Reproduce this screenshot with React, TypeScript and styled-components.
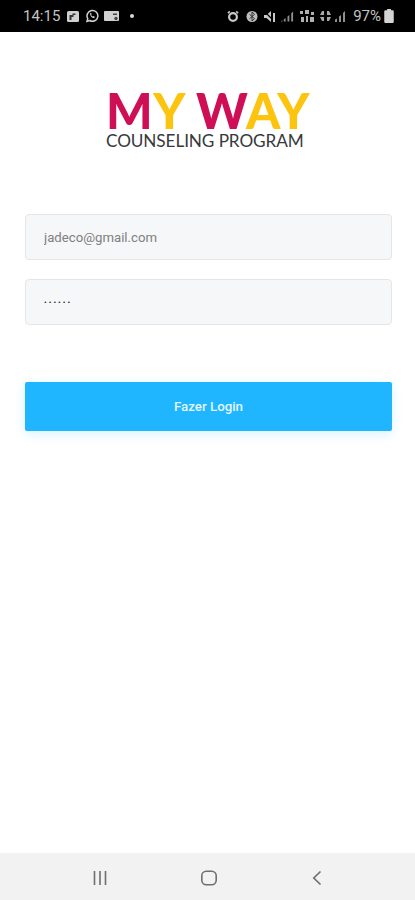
import React, { ReactElement } from 'react';
import styled, { createGlobalStyle } from 'styled-components';

const GlobalStyle = createGlobalStyle`
  html, body {
    margin: 0;
    padding: 0;
    background: #fff;
    font-family: Roboto, "Liberation Sans", sans-serif;
  }
  * { box-sizing: border-box; }
`;

const Screen = styled.div`
  width: 415px;
  height: 900px;
  display: flex;
  flex-direction: column;
  background: #fff;
  overflow: hidden;
`;

const StatusBar = styled.div`
  height: 32px;
  flex: none;
  background: #000;
  color: #c4c4c4;
  display: flex;
  align-items: center;
  justify-content: space-between;
  padding: 0 21px 0 23px;
`;

const StatusGroup = styled.div`
  display: flex;
  align-items: center;
  gap: 5px;
`;

const Clock = styled.span`
  font-size: 15px;
  margin-right: 1px;
`;

const Battery = styled.span`
  font-size: 15px;
  margin-left: 2px;
  margin-right: -2px;
`;

const Content = styled.main`
  flex: 1;
  display: flex;
  flex-direction: column;
  padding: 0 23px 0 25px;
`;

const Logo = styled.div`
  margin-top: 56px;
  margin-left: 81px;
  display: flex;
  flex-direction: column;
  font-family: Lato, "Open Sans", sans-serif;
`;

const LogoTitle = styled.div`
  font-size: 49px;
  line-height: 44px;
  height: 43px;
  font-weight: 900;
  white-space: pre;
  letter-spacing: 0.6px;
`;

const LogoLetter = styled.span<{ $yellow?: boolean }>`
  color: ${({ $yellow }) => ($yellow ? '#fcc30f' : '#cf0f55')};
`;

const LogoSubtitle = styled.div`
  font-size: 17.2px;
  line-height: 20px;
  color: #37393b;
  white-space: nowrap;
  letter-spacing: -0.1px;
`;

const Form = styled.form`
  margin: 63px 0 0;
  display: flex;
  flex-direction: column;
  gap: 19px;
`;

const Field = styled.input`
  width: 100%;
  height: 46px;
  padding: 0 18px;
  border: 1px solid #e4e6e8;
  border-radius: 4px;
  background: #f6f7f9;
  color: #808080;
  font-family: Roboto, "Liberation Sans", sans-serif;
  font-size: 13.2px;
  outline: none;

  &[type='password'] {
    color: #222;
    font-size: 8px;
    letter-spacing: 2px;
  }
`;

const LoginButton = styled.button`
  margin-top: 38px;
  height: 49px;
  border: 0;
  border-radius: 2px;
  background: #1fb6ff;
  box-shadow: 0 3px 12px rgba(31, 182, 255, 0.18);
  color: #e4f6ff;
  font-family: Roboto, "Liberation Sans", sans-serif;
  font-size: 13.3px;
  font-weight: 500;
`;

const NavBar = styled.nav`
  height: 47px;
  flex: none;
  background: #f2f2f2;
  display: flex;
  align-items: center;
  justify-content: space-between;
  padding: 2px 89px 0 91px;
  color: #6f6f6f;
`;

const Icon = styled.svg`
  display: block;
  flex: none;
`;

function StatusIcons(): ReactElement {
  return (
    <StatusBar>
      <StatusGroup>
        <Clock>14:15</Clock>
        <Icon width="14" height="13" viewBox="0 0 13 13">
          <rect x="0.5" y="1" width="12" height="11" rx="1.5" fill="#d0d0d0" />
          <path d="M3 10V5h3V3.5h3V5H7v2H5v3z" fill="#333" />
        </Icon>
        <Icon width="14" height="14" viewBox="0 0 14 14" fill="none">
          <path
            d="M2 12.3l.8-2.700A5.400 5.400 0 1 1 4.700 11.500z"
            stroke="#d0d0d0"
            strokeWidth="1.500"
          />
          <path
            d="M5 4.600c0 2.400 1.900 4.400 4.200 4.600l.6-1.500-1.600-.8-.6.6c-.7-.3-1.200-.9-1.500-1.500l.6-.7-.8-1.500z"
            fill="#d0d0d0"
          />
        </Icon>
        <Icon width="15" height="12" viewBox="0 0 15 12">
          <rect x="0" y="1" width="15" height="10" rx="1" fill="#d0d0d0" />
          <rect x="9" y="3.500" width="4" height="1.500" fill="#444" />
          <circle cx="12" cy="8.500" r="1.700" fill="#444" />
        </Icon>
        <Icon width="4" height="4" viewBox="0 0 4 4" style={{ marginLeft: 6 }}>
          <circle cx="2" cy="2" r="2" fill="#d8d8d8" />
        </Icon>
      </StatusGroup>
      <StatusGroup>
        <Icon width="12" height="13" viewBox="0 0 13 13" fill="none" style={{ marginRight: 2 }}>
          <circle cx="6.500" cy="7" r="4.200" stroke="#c8c8c8" strokeWidth="2.400" />
          <path d="M1 3l2-2M12 3l-2-2" stroke="#c8c8c8" strokeWidth="1.800" />
        </Icon>
        <Icon width="12" height="13" viewBox="0 0 12 13" fill="none">
          <circle cx="6" cy="6.500" r="5.500" fill="#bdbdbd" />
          <path d="M3.500 4.300l5 4.300L6 11V2l2.500 2.400-5 4.300" stroke="#333" strokeWidth="1" />
        </Icon>
        <Icon width="13" height="13" viewBox="0 0 13 13">
          <path d="M1 5h2.500L8 1v11L3.500 8H1z" fill="#c8c8c8" />
          <path d="M1 1l11 11" stroke="#000" strokeWidth="1.200" />
          <rect x="10" y="3" width="2" height="9" fill="#c8c8c8" />
        </Icon>
        <Icon width="13" height="13" viewBox="0 0 14 13" fill="#8f8f8f">
          <path d="M13 1v11h-2V3zM9 5v7H7V6.500zM5 8.500V12H3V9.500zM1.500 10.500V12H0v-.5z" />
        </Icon>
        <Icon width="16" height="14" viewBox="0 0 16 14" fill="none">
          <path d="M1 2h3v3H1zM6 1h4v4H6zM12 3h3v3h-3zM2 8h3v5H2zM7 7h2v6H7zM11 8h4v5h-4z" fill="#b0b0b0" />
        </Icon>
        <Icon width="11" height="13" viewBox="0 0 11 13" fill="#a8a8a8">
          <path d="M2 1h2v4H0zM7 1h2l2 4H7zM0 7h4v4H2zM7 7h4l-2 4H7z" />
        </Icon>
        <Icon width="13" height="13" viewBox="0 0 13 13" fill="#8f8f8f" style={{ marginLeft: -3 }}>
          <path d="M12 1v11h-2V3zM8 5v7H6V6.500zM4 8.500V12H2V9.500z" />
        </Icon>
        <Battery>97%</Battery>
        <Icon width="10" height="14" viewBox="0 0 8 13" preserveAspectRatio="none">
          <path
            d="M2.500 0h3v1.200h1.300a1 1 0 0 1 1 1V12a1 1 0 0 1-1 1H1.200a1 1 0 0 1-1-1V2.200a1 1 0 0 1 1-1h1.300z"
            fill="#d4d4d4"
          />
        </Icon>
      </StatusGroup>
    </StatusBar>
  );
}

export default function App(): ReactElement {
  return (
    <>
      <GlobalStyle />
      <Screen>
        <StatusIcons />
        <Content>
          <Logo>
            <LogoTitle>
              <LogoLetter>M</LogoLetter>
              <LogoLetter $yellow>Y </LogoLetter>
              <LogoLetter>W</LogoLetter>
              <LogoLetter $yellow>AY</LogoLetter>
            </LogoTitle>
            <LogoSubtitle>COUNSELING PROGRAM</LogoSubtitle>
          </Logo>
          <Form>
            <Field type="text" value="jadeco@gmail.com" readOnly />
            <Field type="password" value="123456" readOnly />
            <LoginButton type="button">Fazer Login</LoginButton>
          </Form>
        </Content>
        <NavBar>
          <Icon width="18" height="16" viewBox="0 0 18 16" stroke="currentColor" strokeWidth="1.600">
            <path d="M3.500 1v14M9 1v14M14.500 1v14" />
          </Icon>
          <Icon width="18" height="16" viewBox="0 0 18 16" fill="none" stroke="currentColor" strokeWidth="1.600">
            <rect x="1.800" y="1.200" width="14.400" height="13.600" rx="4.500" />
          </Icon>
          <Icon width="18" height="16" viewBox="0 0 18 16" fill="none" stroke="currentColor" strokeWidth="1.700">
            <path d="M12.500 1.500L5.800 8l6.700 6.500" />
          </Icon>
        </NavBar>
      </Screen>
    </>
  );
}
